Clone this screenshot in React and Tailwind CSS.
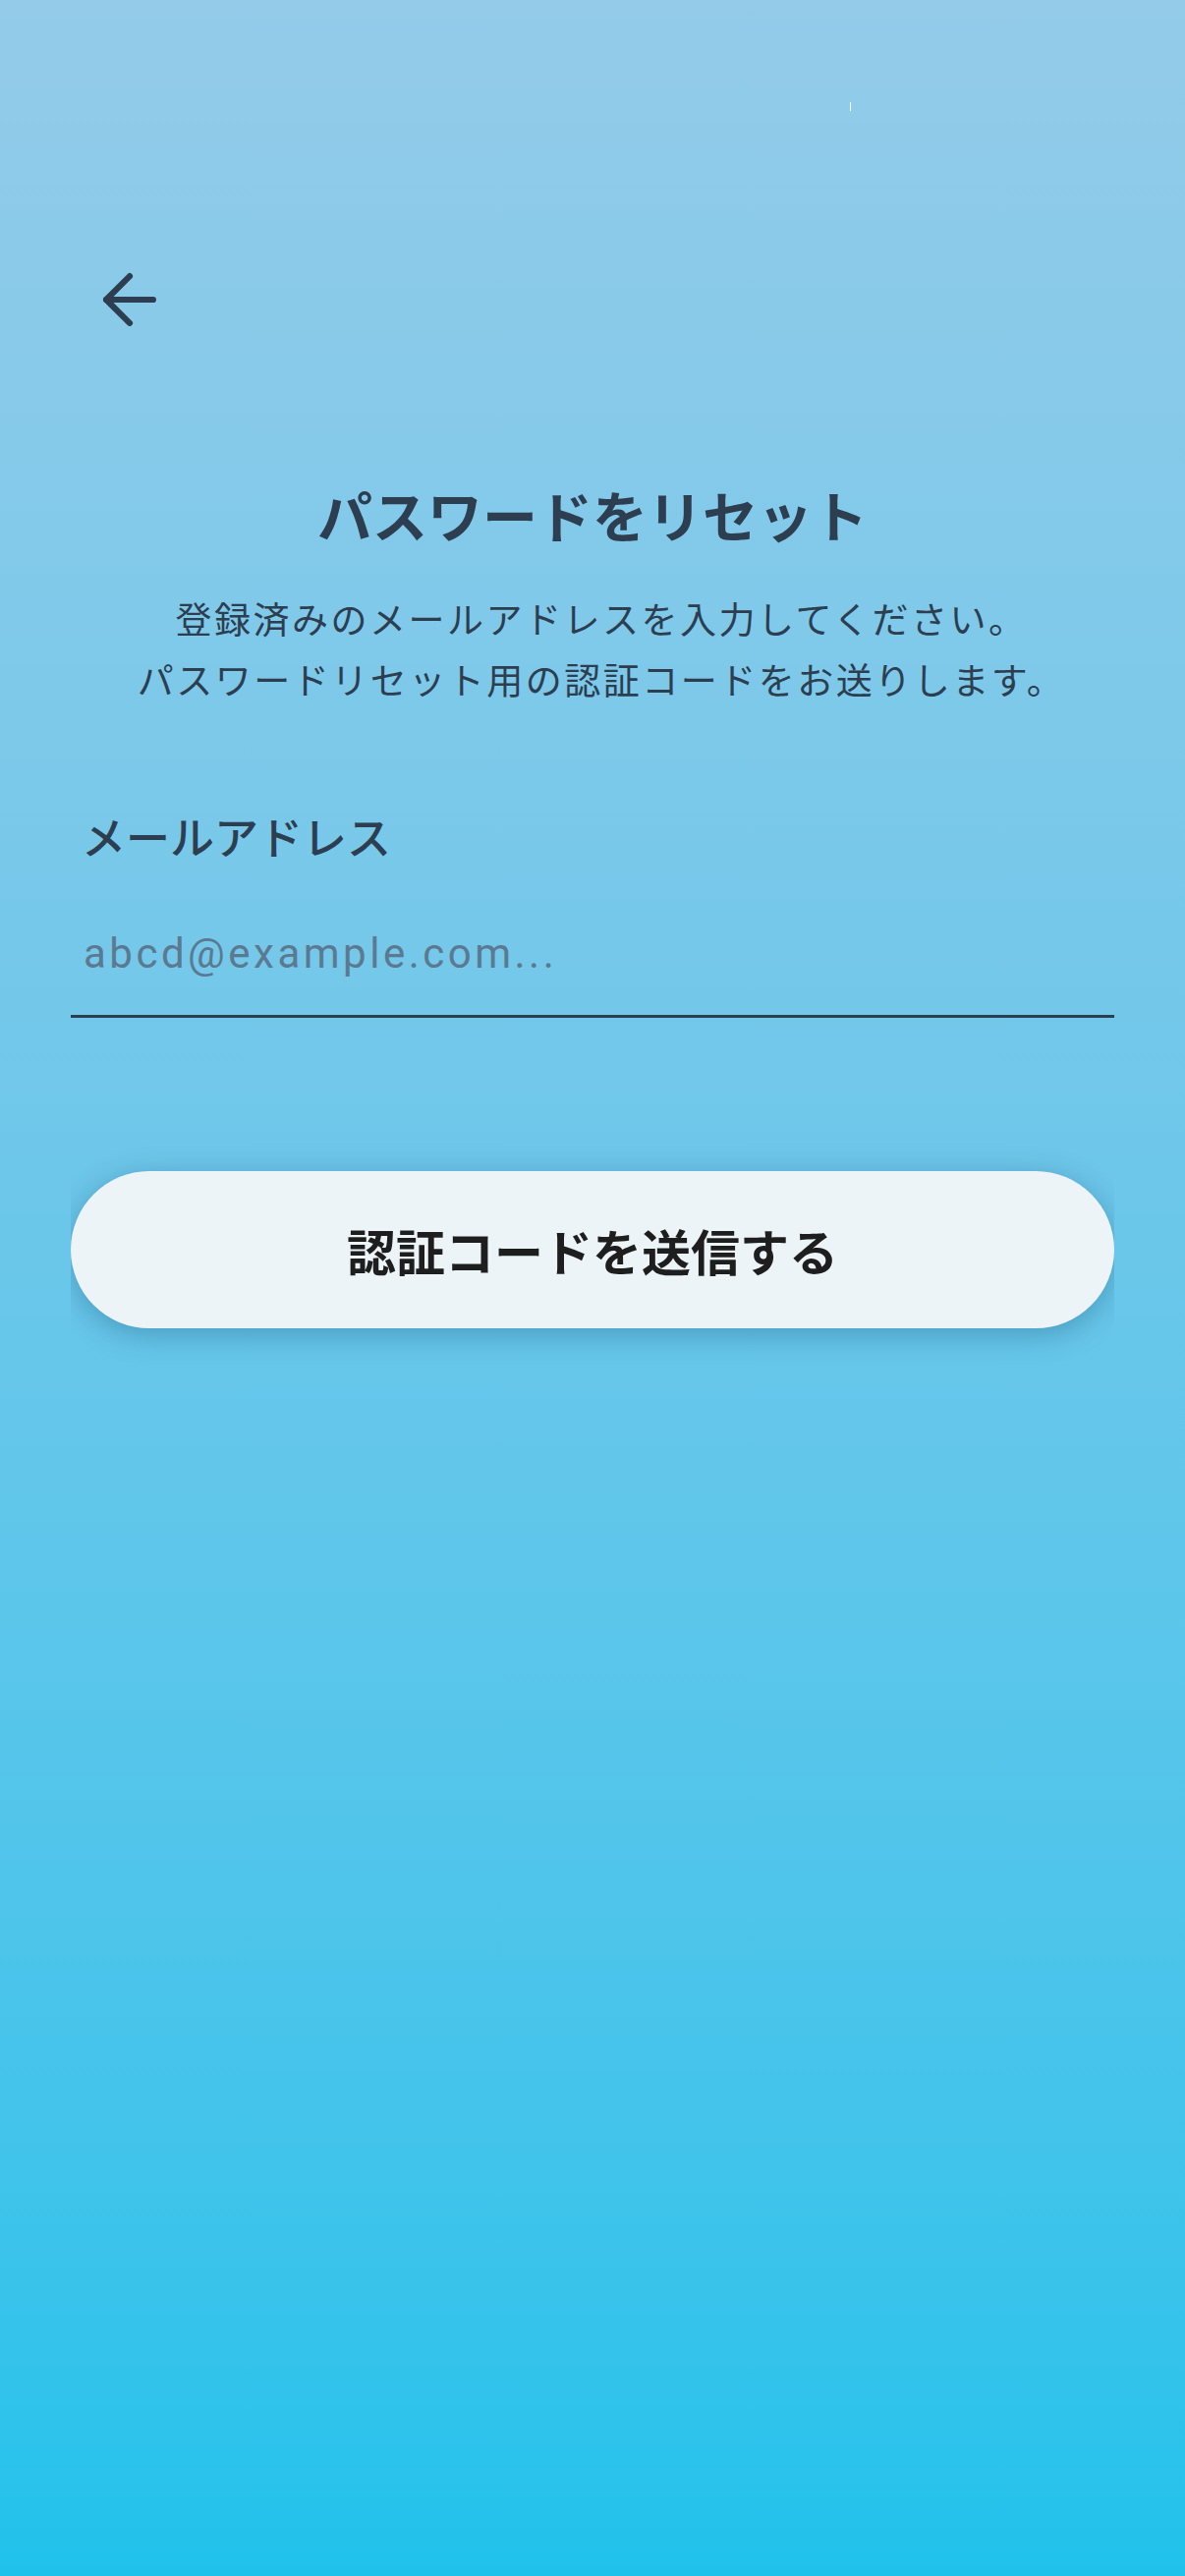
import { ArrowLeft } from "lucide-react";

const jp = { fontFamily: '"Noto Sans CJK JP", "Noto Sans", sans-serif' };

const ResetPassword = () => {
    return (
        <div
            className="relative min-h-[2622px] w-full bg-gradient-to-b from-[#93cbe9] to-[#1fc2eb] text-[#2c3e50]"
            style={jp}
        >
            {/* stray status bar mark */}
            <div className="absolute left-[865px] top-[104px] h-[9px] w-px bg-white" />

            <div className="pl-[91px] pt-[264px]">
                <button className="block">
                    <ArrowLeft size={82} strokeWidth={1.8} color="#2c3e50" />
                </button>
            </div>

            <div className="px-[72px]">
                <h1 className="mt-[141px] text-center text-[56px] font-bold leading-[72px]">
                    パスワードをリセット
                </h1>
                <p className="mt-[39px] pl-[18px] text-center text-[37px] leading-[62px] tracking-[2.5px]">
                    登録済みのメールアドレスを入力してください。
                    <br />
                    パスワードリセット用の認証コードをお送りします。
                </p>

                <label className="mt-[102px] block px-[11px] text-[45px] font-medium leading-[53px]">
                    メールアドレス
                </label>

                <div className="mt-[64px] border-b-[3px] border-[#2c3e50] pb-[32px]">
                    <input
                        type="email"
                        placeholder="abcd@example.com..."
                        className="block h-[60px] w-full bg-transparent px-[13px] text-[42px] leading-[60px] tracking-[3.5px] text-[#2c3e50] outline-none placeholder:text-[#5b7a91]"
                        style={{ fontFamily: 'Roboto, "Noto Sans CJK JP", sans-serif' }}
                    />
                </div>

                <div className="mt-[156px] overflow-x-clip">
                    <button className="flex h-[160px] w-full items-center justify-center rounded-full bg-[#edf4f8] text-[50px] font-bold text-[#1e1e1e] shadow-[0_6px_30px_rgba(0,50,90,0.3)]">
                        認証コードを送信する
                    </button>
                </div>
            </div>
        </div>
    );
};

export default ResetPassword;
